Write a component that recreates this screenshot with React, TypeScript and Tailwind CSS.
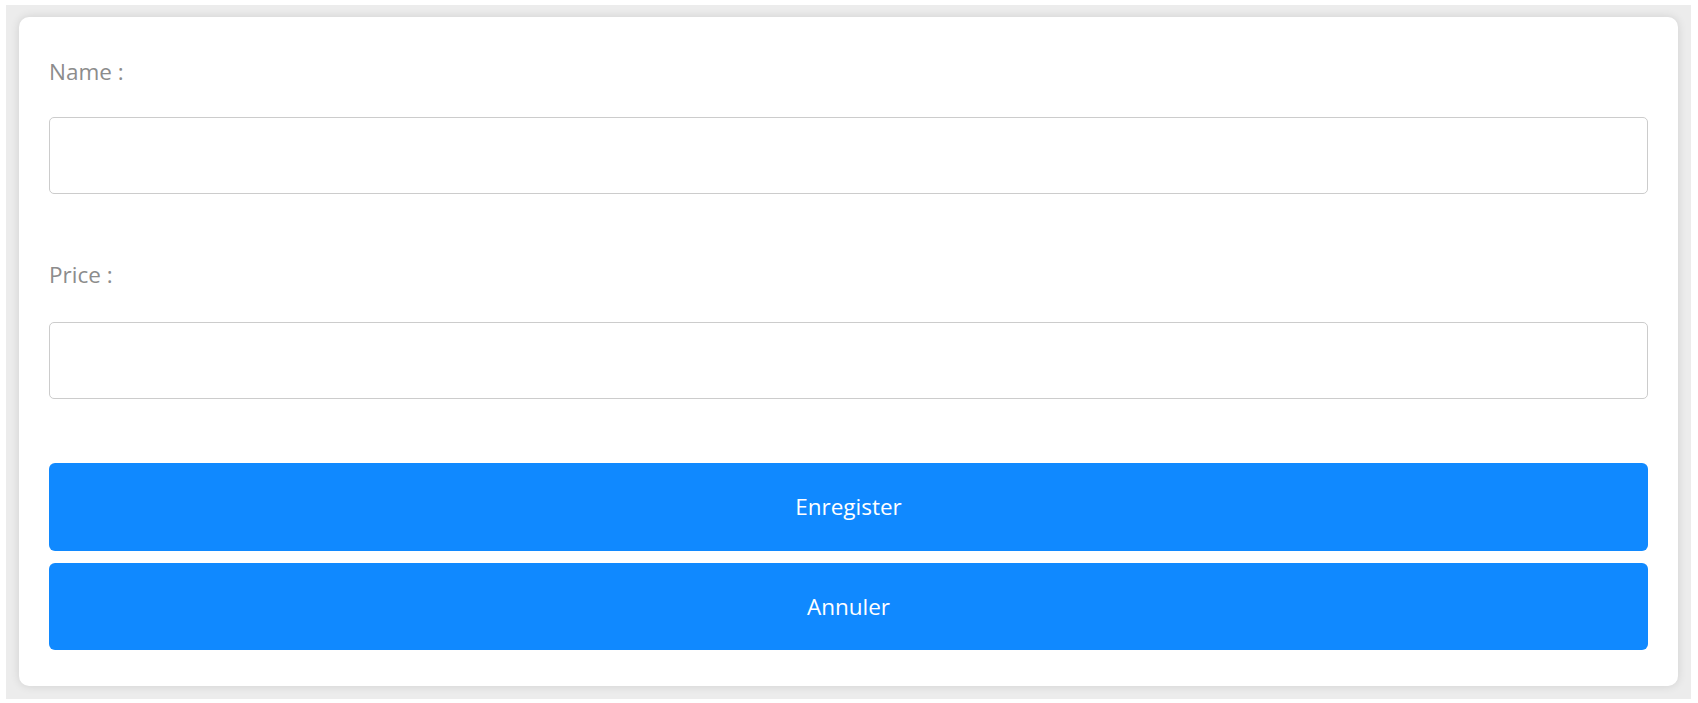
export default function App() {
  return (
    <div className="min-h-[703px] bg-white pt-[5px] pb-[5px] pl-[6px] pr-[7px]" style={{ fontFamily: '"Open Sans", "Noto Sans", sans-serif' }}>
      <div className="bg-[#ececec] px-[13px] pt-[12px] pb-[13px]">
        <form
          className="flex flex-col bg-white rounded-[10px] px-[30px] pt-[40px] pb-[36px] shadow-[0_0_10px_rgba(0,0,0,0.12)]"
          onSubmit={(e) => e.preventDefault()}
        >
          <label className="h-[30px] leading-[30px] text-[22.5px] text-[#8c8c8c]">Name :</label>
          <input
            type="text"
            className="mt-[30px] h-[77px] w-full rounded-[5px] border border-[#cccccc] px-3 text-[20px] outline-none"
          />
          <label className="mt-[66px] h-[30px] leading-[30px] text-[22.5px] text-[#8c8c8c]">Price :</label>
          <input
            type="text"
            className="mt-[32px] h-[77px] w-full rounded-[5px] border border-[#cccccc] px-3 text-[20px] outline-none"
          />
          <button
            type="submit"
            className="mt-[64px] h-[88px] w-full rounded-[6px] bg-[#1089ff] text-[22.5px] text-white"
          >
            Enregister
          </button>
          <button
            type="button"
            className="mt-[12px] h-[87px] w-full rounded-[6px] bg-[#1089ff] text-[22.5px] text-white"
          >
            Annuler
          </button>
        </form>
      </div>
    </div>
  );
}
